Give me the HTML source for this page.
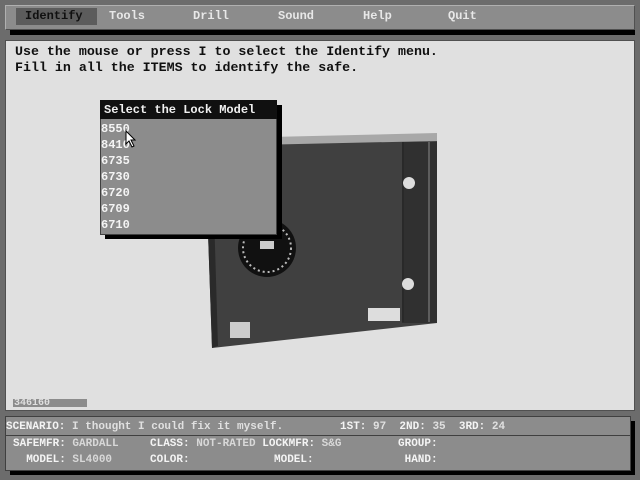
<!DOCTYPE html>
<html><head><style>
*{margin:0;padding:0;box-sizing:border-box}
body{width:640px;height:480px;background:#6c6c6c;position:relative;overflow:hidden;font-family:"Liberation Mono",monospace;font-weight:bold}
.a{position:absolute;white-space:pre}
</style></head><body>
<div class="a" style="left:5px;top:5px;width:630px;height:25px;background:#8c8c8c;border:1px solid #b0b0b0;border-right-color:#505050;border-bottom-color:#505050"></div>
<div class="a" style="left:16px;top:8px;width:81px;height:17px;background:#5c5c5c"></div>
<div class="a" style="left:25px;top:9px;font-size:12px;color:#101010;line-height:15px">Identify</div>
<div class="a" style="left:109px;top:9px;font-size:12px;color:#e8e8e8;line-height:15px">Tools</div>
<div class="a" style="left:193px;top:9px;font-size:12px;color:#e8e8e8;line-height:15px">Drill</div>
<div class="a" style="left:278px;top:9px;font-size:12px;color:#e8e8e8;line-height:15px">Sound</div>
<div class="a" style="left:363px;top:9px;font-size:12px;color:#e8e8e8;line-height:15px">Help</div>
<div class="a" style="left:448px;top:9px;font-size:12px;color:#e8e8e8;line-height:15px">Quit</div>
<div class="a" style="left:10px;top:30px;width:625px;height:5px;background:#000"></div>
<div class="a" style="left:5px;top:40px;width:630px;height:371px;background:#e0e0e0;border:1px solid #505050"></div>
<div class="a" style="left:15px;top:44px;font-size:13.3px;color:#101010;line-height:16px">Use the mouse or press I to select the Identify menu.
Fill in all the ITEMS to identify the safe.</div>
<svg class="a" style="left:0;top:0" width="640" height="480">
<polygon points="270,137 437,133 437,141 270,146" fill="#a8a8a8"/>
<polygon points="205,146 437,141 437,323 212,348" fill="#404040"/>
<polygon points="205,146 212,146 218,346 212,348" fill="#2a2a2a"/>
<rect x="402" y="142" width="35" height="181" fill="#303030"/>
<line x1="403" y1="142" x2="403" y2="322" stroke="#222" stroke-width="1"/>
<line x1="429" y1="142" x2="429" y2="322" stroke="#8a8a8a" stroke-width="1"/>
<circle cx="409" cy="183" r="6" fill="#ddd"/>
<circle cx="408" cy="284" r="6" fill="#ddd"/>
<circle cx="267" cy="248" r="29" fill="#111"/>
<circle cx="267" cy="248" r="24" fill="none" stroke="#bbb" stroke-width="2" stroke-dasharray="2 3"/>
<rect x="260" y="241" width="14" height="8" fill="#ccc"/>
<rect x="368" y="308" width="32" height="13" fill="#ddd"/>
<rect x="230" y="322" width="20" height="16" fill="#ccc"/>
</svg>
<div class="a" style="left:105px;top:105px;width:177px;height:134px;background:#000"></div>
<div class="a" style="left:100px;top:100px;width:177px;height:135px;background:#8c8c8c;border:1px solid #404040"></div>
<div class="a" style="left:100px;top:100px;width:177px;height:19px;background:#101010"></div>
<div class="a" style="left:104px;top:103px;font-size:12px;color:#f0f0f0;line-height:14px">Select the Lock Model</div>
<div class="a" style="left:101px;top:121px;font-size:12px;color:#f4f4f4;line-height:16px">8550
8410
6735
6730
6720
6709
6710</div>
<svg class="a" style="left:125px;top:130px" width="12" height="18"><path d="M1 1 L1 14 L4 11 L7 17 L9 16 L6 10 L10 10 Z" fill="#fff" stroke="#000"/></svg>
<div class="a" style="left:13px;top:399px;width:74px;height:8px;background:#8c8c8c"></div>
<div class="a" style="left:14px;top:398px;font-size:10px;color:#e0e0e0;line-height:11px">346160</div>
<div class="a" style="left:10px;top:421px;width:625px;height:54px;background:#000"></div>
<div class="a" style="left:5px;top:416px;width:626px;height:55px;background:#8c8c8c;border:1px solid #404040"></div>
<div class="a" style="left:6px;top:435px;width:624px;height:1px;background:#404040"></div>
<div class="a" style="left:6px;top:420px;font-size:11px;line-height:14px;color:#f4f4f4">SCENARIO:</div>
<div class="a" style="left:72px;top:420px;font-size:11px;line-height:14px;color:#e0e0e0">I thought I could fix it myself.</div>
<div class="a" style="left:340px;top:420px;font-size:11px;line-height:14px;color:#f4f4f4">1ST: <span style="color:#e0e0e0">97</span>  2ND: <span style="color:#e0e0e0">35</span>  3RD: <span style="color:#e0e0e0">24</span></div>
<div class="a" style="left:13px;top:436px;font-size:11px;line-height:16px;color:#f4f4f4">SAFEMFR: <span style="color:#d8d8d8">GARDALL</span>
  MODEL: <span style="color:#d8d8d8">SL4000</span></div>
<div class="a" style="left:150px;top:436px;font-size:11px;line-height:16px;color:#f4f4f4">CLASS: <span style="color:#d8d8d8">NOT-RATED</span> LOCKMFR: <span style="color:#d8d8d8">S&amp;G</span>
COLOR:</div>
<div class="a" style="left:274px;top:452px;font-size:11px;line-height:16px;color:#f4f4f4">MODEL:</div>
<div class="a" style="left:398px;top:436px;font-size:11px;line-height:16px;color:#f4f4f4">GROUP:
 HAND:</div>
</body></html>
